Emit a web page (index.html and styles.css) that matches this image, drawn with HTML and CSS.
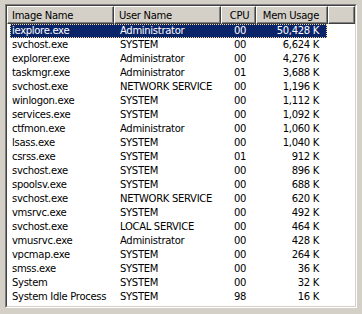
FILE: index.html
```html
<!DOCTYPE html>
<html>
<head>
<meta charset="utf-8">
<link rel="stylesheet" href="styles.css">
</head>
<body>
<div class="frame">
  <div class="list">
    <div class="inner">
      <div class="header">
        <div class="hcell h1">Image Name</div>
        <div class="hcell h2">User Name</div>
        <div class="hcell h3">CPU</div>
        <div class="hcell h4">Mem Usage</div>
        <div class="hcell hfill"></div>
      </div>
      <div class="rows">
        <div class="row selected"><span class="c1">iexplore.exe</span><span class="c2">Administrator</span><span class="c3">00</span><span class="c4">50,428 K</span></div>
        <div class="row"><span class="c1">svchost.exe</span><span class="c2">SYSTEM</span><span class="c3">00</span><span class="c4">6,624 K</span></div>
        <div class="row"><span class="c1">explorer.exe</span><span class="c2">Administrator</span><span class="c3">00</span><span class="c4">4,276 K</span></div>
        <div class="row"><span class="c1">taskmgr.exe</span><span class="c2">Administrator</span><span class="c3">01</span><span class="c4">3,688 K</span></div>
        <div class="row"><span class="c1">svchost.exe</span><span class="c2">NETWORK SERVICE</span><span class="c3">00</span><span class="c4">1,196 K</span></div>
        <div class="row"><span class="c1">winlogon.exe</span><span class="c2">SYSTEM</span><span class="c3">00</span><span class="c4">1,112 K</span></div>
        <div class="row"><span class="c1">services.exe</span><span class="c2">SYSTEM</span><span class="c3">00</span><span class="c4">1,092 K</span></div>
        <div class="row"><span class="c1">ctfmon.exe</span><span class="c2">Administrator</span><span class="c3">00</span><span class="c4">1,060 K</span></div>
        <div class="row"><span class="c1">lsass.exe</span><span class="c2">SYSTEM</span><span class="c3">00</span><span class="c4">1,040 K</span></div>
        <div class="row"><span class="c1">csrss.exe</span><span class="c2">SYSTEM</span><span class="c3">01</span><span class="c4">912 K</span></div>
        <div class="row"><span class="c1">svchost.exe</span><span class="c2">SYSTEM</span><span class="c3">00</span><span class="c4">896 K</span></div>
        <div class="row"><span class="c1">spoolsv.exe</span><span class="c2">SYSTEM</span><span class="c3">00</span><span class="c4">688 K</span></div>
        <div class="row"><span class="c1">svchost.exe</span><span class="c2">NETWORK SERVICE</span><span class="c3">00</span><span class="c4">620 K</span></div>
        <div class="row"><span class="c1">vmsrvc.exe</span><span class="c2">SYSTEM</span><span class="c3">00</span><span class="c4">492 K</span></div>
        <div class="row"><span class="c1">svchost.exe</span><span class="c2">LOCAL SERVICE</span><span class="c3">00</span><span class="c4">464 K</span></div>
        <div class="row"><span class="c1">vmusrvc.exe</span><span class="c2">Administrator</span><span class="c3">00</span><span class="c4">428 K</span></div>
        <div class="row"><span class="c1">vpcmap.exe</span><span class="c2">SYSTEM</span><span class="c3">00</span><span class="c4">264 K</span></div>
        <div class="row"><span class="c1">smss.exe</span><span class="c2">SYSTEM</span><span class="c3">00</span><span class="c4">36 K</span></div>
        <div class="row"><span class="c1">System</span><span class="c2">SYSTEM</span><span class="c3">00</span><span class="c4">32 K</span></div>
        <div class="row"><span class="c1">System Idle Process</span><span class="c2">SYSTEM</span><span class="c3">98</span><span class="c4">16 K</span></div>
      </div>
    </div>
  </div>
</div>
</body>
</html>
```
FILE: styles.css
```css
html, body {
  margin: 0;
  padding: 0;
  background: #d4d0c8;
}
body {
  font-family: "DejaVu Sans", "Liberation Sans", sans-serif;
  font-size: 10px;
  letter-spacing: -0.3px;
  color: #000;
}
.frame {
  padding: 4px 5px 0 5px;
}
.list {
  width: 352px;
  height: 304px;
  box-sizing: border-box;
  border: 1px solid;
  border-color: #808080 #ffffff #ffffff #808080;
}
.inner {
  height: 100%;
  box-sizing: border-box;
  border: 1px solid;
  border-color: #404040 #d4d0c8 #d4d0c8 #404040;
  background: #fff;
  overflow: hidden;
}
.header {
  display: flex;
  height: 18px;
  background: #d4d0c8;
}
.hcell {
  box-sizing: border-box;
  height: 18px;
  border-top: 1px solid #fff;
  border-left: 1px solid #fff;
  border-right: 1px solid #404040;
  border-bottom: 1px solid #404040;
  box-shadow: inset -1px -1px 0 #808080;
  padding-top: 2px;
  line-height: 14px;
  white-space: nowrap;
  overflow: hidden;
}
.h1 { width: 107px; padding-left: 4px; }
.h2 { width: 107px; padding-left: 4px; }
.h3 { width: 35px; text-align: center; padding-left: 2px; }
.h4 { width: 72px; text-align: right; padding-right: 8px; }
.hfill { flex: 1; }
.rows {
  display: flex;
  flex-direction: column;
}
.row {
  display: flex;
  height: 14px;
  line-height: 14px;
  margin-left: 3px;
  width: 317px;
  white-space: nowrap;
}
.row > span {
  display: block;
  overflow: hidden;
  box-sizing: border-box;
}
.c1 { width: 104px; padding-left: 2px; }
.c2 { width: 107px; padding-left: 6px; }
.c3 { width: 35px; text-align: center; padding-left: 3px; }
.c4 { width: 71px; text-align: right; padding-right: 8px; }
.selected {
  background: #0a246a;
  color: #fff;
  outline: 1px dotted #f5db95;
  outline-offset: -1px;
}
```
